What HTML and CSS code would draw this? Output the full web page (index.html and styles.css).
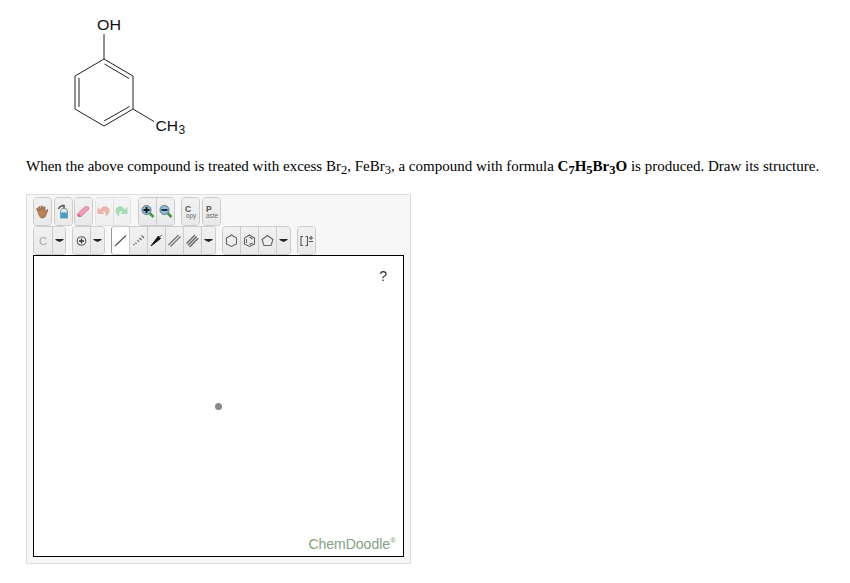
FILE: index.html
```html
<!DOCTYPE html>
<html lang="en">
<head>
<meta charset="utf-8">
<title>Draw the structure</title>
<link rel="stylesheet" href="styles.css">
</head>
<body>
<svg class="molecule" width="150" height="140" viewBox="60 5 150 140">
  <path d="M104 34V59M104 59L133 76V109L104 126L75 109V76ZM104.5 64L129 78.500M79 78V107M104 121L129.500 106.500M133 109L154 121.500"/>
  <text x="97" y="30" textLength="24" lengthAdjust="spacingAndGlyphs">OH</text>
  <text x="155.500" y="131" textLength="22.500" lengthAdjust="spacingAndGlyphs">CH</text><text class="small" x="178.500" y="133.500">3</text>
</svg>
<p class="question">When the above compound is treated with excess Br<sub>2</sub>, FeBr<sub>3</sub>, a compound with formula <b>C<sub>7</sub>H<sub>5</sub>Br<sub>3</sub>O</b> is produced. Draw its structure.</p>
<main class="sketcher">
  <div class="toolbar">
    <div class="group"><button class="w17"><svg width="18" height="28"><path d="M4.500 13L3.500 10.500 4.500 10 6.500 12.500 5.500 9 6.500 8.500 8 12 8 8H9.200L10 12 11 8.500 12 9 12 13.500 14 11.500 15 12 13 17Q12 20 9.500 20Q7.500 20 6.500 18Z" fill="#b98256" stroke="#8d6040" stroke-width=".7"/></svg></button></div>
    <div class="group g2"><button class="w17"><svg width="18" height="28"><path d="M4.500 11Q6 7.500 10 7.500V10.500" fill="none" stroke="#4b5558" stroke-width="1.500"/><path d="M8 10.500H12L13.500 13V20H6.500V13Z" fill="#dfe9ec" stroke="#71868c" stroke-width=".8"/><path d="M7 14.500H13V20H7Z" fill="#3d9fcb"/></svg></button></div>
    <div class="group g1"><button class="w17"><svg width="17" height="28"><path d="M3.500 16L11 8.500 14.500 9 15 11 7 18.500 4 18.500Z" fill="#efa0b7" stroke="#d07b96" stroke-width=".8"/><path d="M3.500 16L6.500 17V18.500H4Z" fill="#d7678b"/></svg></button></div>
    <div class="group g2 faded"><button class="w17"><svg width="17" height="28"><path d="M2.500 9V16H9.500L7.500 13.500Q11 12 11 18.500 17 13 13 9.500 9 6 5 11.500Z" fill="#d96d61"/></svg></button><button class="w17"><svg width="17" height="28"><path d="M14.500 9V16H7.500L9.500 13.500Q6 12 6 18.500 0 13 4 9.500 8 6 12 11.500Z" fill="#50bd68"/></svg></button></div>
    <div class="group g7"><button class="w17"><svg width="18" height="28"><path d="M11.500 15L15.500 19" stroke="#3e963f" stroke-width="2.500"/><circle cx="8.500" cy="12" r="4.500" fill="#91bddb" stroke="#547991"/><path d="M5.500 12H11.500M8.500 9V15" stroke="#111" stroke-width="1.800"/></svg></button><button class="w18"><svg width="18" height="28"><path d="M11.500 15L15.500 19" stroke="#3e963f" stroke-width="2.500"/><circle cx="8.500" cy="12" r="4.500" fill="#91bddb" stroke="#547991"/><path d="M5.500 12H11.500" stroke="#173044" stroke-width="1.800"/></svg></button></div>
    <div class="group g6"><button class="w17"><svg class="label" width="18" height="28"><text class="cap" x="4" y="13.500">C</text><text x="5" y="20" textLength="10" lengthAdjust="spacingAndGlyphs">opy</text></svg></button></div>
    <div class="group g2"><button class="w17"><svg class="label" width="18" height="28"><text class="cap" x="4" y="13.500">P</text><text x="4" y="20" textLength="12" lengthAdjust="spacingAndGlyphs">aste</text></svg></button></div>
  </div>
  <div class="toolbar">
    <div class="group"><button class="w18 dim"><svg width="18" height="28"><text class="atom" x="6" y="17.500">C</text></svg></button><button class="w13"><svg width="14" height="28"><path d="M3.500 12H11.500V13L7.500 15 3.500 13Z" fill="#222"/></svg></button></div>
    <div class="group g6"><button class="w17"><svg width="17" height="28"><circle cx="9.500" cy="14" r="4.300" fill="none" stroke="#555" stroke-width="1.100"/><path d="M7 14H12M9.500 11.500V16.500" stroke="#333" stroke-width="1.300"/></svg></button><button class="w14"><svg width="14" height="28"><path d="M3.500 12H11.500V13L7.500 15 3.500 13Z" fill="#222"/></svg></button></div>
    <div class="group g6 has-selected"><button class="w17 selected"><svg width="17" height="28"><path d="M4 19L15 8.500" stroke="#555" stroke-width="1.200"/></svg></button><button class="w18"><svg width="17" height="28"><path d="M4.500 17L5.500 18M6.500 15.500L7.500 16.800M8.500 13L10 15M10.500 11L12.500 13M12.500 8.500L15 11" stroke="#666" stroke-width="1.200"/></svg></button><button class="w18"><svg width="17" height="28"><path d="M4 19L11.500 9 13.500 11.500Z" fill="#111" stroke="#111"/><path d="M12 10.500L15 8" stroke="#666"/></svg></button><button class="w18"><svg width="17" height="28"><path d="M3.500 18L13.500 8M5.500 19.500L15.500 9.500" stroke="#777" stroke-width="1.400"/></svg></button><button class="w18"><svg width="17" height="28"><path d="M3.500 16.500L12 8M5 18.200L13.700 9.500M6.500 20L15.200 11.200" stroke="#666" stroke-width="1.400"/></svg></button><button class="w14"><svg width="14" height="28"><path d="M3.500 12H11.500V13L7.500 15 3.500 13Z" fill="#222"/></svg></button></div>
    <div class="group g6"><button class="w17"><svg width="17" height="28"><path d="M9.500 8L14.500 11V17L9.500 19.500 4.500 17V11Z" class="ring"/></svg></button><button class="w18"><svg width="17" height="28"><path d="M9.500 8L14.500 11V17L9.500 19.500 4.500 17V11ZM6.500 12V16M9.500 10L12.500 12M9.500 17.500L12.500 16" class="ring"/></svg></button><button class="w18"><svg width="17" height="28"><path d="M9.500 8.500L15 12.500 13 18.500H6L4 12.500Z" class="ring"/></svg></button><button class="w14"><svg width="14" height="28"><path d="M3.500 12H11.500V13L7.500 15 3.500 13Z" fill="#222"/></svg></button></div>
    <div class="group g6"><button class="w17"><svg width="18" height="28"><path d="M6 9.500H4V18.500H6M8.500 9.500H10.500V18.500H8.500M12 11H16M14 9V13M12 14.500H16" fill="none" stroke="#555" stroke-width="1.100"/></svg></button></div>
  </div>
  <section class="canvas"><span class="help">?</span><i class="dot"></i><span class="brand">ChemDoodle<sup>®</sup></span></section>
</main>
</body>
</html>
```
FILE: styles.css
```css
* { box-sizing: border-box; }
body { margin: 0; background: #fff; color: #000; }
.molecule { display: block; margin: 5px 0 0 60px; }
.molecule path { fill: none; stroke: #222; stroke-width: 1; }
.molecule text { font: 15.5px "Liberation Sans", Arial, sans-serif; fill: #111; }
.molecule .small { font-size: 12px; }
.question { margin: 11px 0 0 26px; height: 38px; font: 15px/20px "Liberation Serif", "Times New Roman", serif; white-space: nowrap; }
.question sub { font-size: 12.5px; line-height: 0; vertical-align: -3px; }
.sketcher { width: 385px; height: 370px; margin-left: 26px; padding: 2px 6px; border: 1px solid #ddd; background: #f7f7f7; }
.toolbar { display: flex; height: 29px; }
.group { display: flex; height: 29px; border: 1px solid #ccc; border-radius: 4px; overflow: hidden; background: #ededed; }
.g1 { margin-left: 1px; }
.g2 { margin-left: 2px; }
.g6 { margin-left: 6px; }
.g7 { margin-left: 7px; }
.group button { display: block; height: 27px; padding: 0; margin: 0; border: 0; background: linear-gradient(#f1f1f1, #e9e9e9); overflow: hidden; }
.group button + button { border-left: 1px solid #ccc; }
.group svg { display: block; margin-left: -1px; }
.w13 { width: 13px; }
.w14 { width: 14px; }
.w17 { width: 17px; }
.w18 { width: 18px; }
.faded { opacity: .48; }
.dim svg { opacity: .7; }
.group .selected { background: #fff; }
.has-selected { border-left-color: #999; }
.label text { font: 6.5px "Liberation Sans", Arial, sans-serif; fill: #666; }
.label .cap { font-size: 8.5px; font-weight: bold; fill: #555; }
.atom { font: 11px "Liberation Sans", Arial, sans-serif; fill: #888; }
.ring { fill: none; stroke: #666; stroke-width: 1.1; }
.canvas { position: relative; width: 371px; height: 302px; border: 1px solid #000; background: #fff; font-family: "Liberation Sans", Arial, sans-serif; }
.help { position: absolute; right: 16px; top: 12px; font-size: 14px; line-height: 17px; color: #333; }
.dot { position: absolute; left: 181px; top: 146.5px; width: 7px; height: 7px; border-radius: 50%; background: #888; }
.brand { position: absolute; right: 7px; bottom: 3px; font-size: 14px; line-height: 17px; color: #81a381; }
.brand sup { font-size: 8px; line-height: 0; vertical-align: 6px; }
```
